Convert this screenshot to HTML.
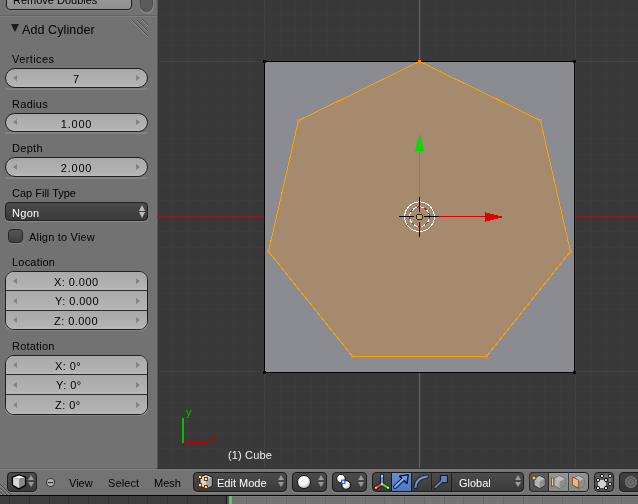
<!DOCTYPE html><html><head><meta charset="utf-8"><style>
*{margin:0;padding:0;box-sizing:border-box}
html,body{width:638px;height:504px;overflow:hidden;background:#393939;font-family:"Liberation Sans",sans-serif;font-size:11px}
.a{position:absolute}
.t{position:absolute;white-space:nowrap;line-height:1;color:#000;will-change:transform}
svg{position:absolute;left:0;top:0}
</style></head><body>
<svg width="638" height="504" viewBox="0 0 638 504"><rect x="0" y="0" width="638" height="504" fill="#393939"/><g shape-rendering="crispEdges"><rect x="171" y="0" width="1" height="469" fill="#3c3c3c"/><rect x="187" y="0" width="1" height="469" fill="#3c3c3c"/><rect x="202" y="0" width="1" height="469" fill="#3c3c3c"/><rect x="218" y="0" width="1" height="469" fill="#3c3c3c"/><rect x="233" y="0" width="1" height="469" fill="#3c3c3c"/><rect x="249" y="0" width="1" height="469" fill="#3c3c3c"/><rect x="264" y="0" width="1" height="469" fill="#434343"/><rect x="280" y="0" width="1" height="469" fill="#3c3c3c"/><rect x="295" y="0" width="1" height="469" fill="#3c3c3c"/><rect x="311" y="0" width="1" height="469" fill="#3c3c3c"/><rect x="327" y="0" width="1" height="469" fill="#3c3c3c"/><rect x="342" y="0" width="1" height="469" fill="#3c3c3c"/><rect x="358" y="0" width="1" height="469" fill="#3c3c3c"/><rect x="373" y="0" width="1" height="469" fill="#3c3c3c"/><rect x="389" y="0" width="1" height="469" fill="#3c3c3c"/><rect x="404" y="0" width="1" height="469" fill="#3c3c3c"/><rect x="420" y="0" width="1" height="469" fill="#434343"/><rect x="435" y="0" width="1" height="469" fill="#3c3c3c"/><rect x="451" y="0" width="1" height="469" fill="#3c3c3c"/><rect x="466" y="0" width="1" height="469" fill="#3c3c3c"/><rect x="482" y="0" width="1" height="469" fill="#3c3c3c"/><rect x="498" y="0" width="1" height="469" fill="#3c3c3c"/><rect x="513" y="0" width="1" height="469" fill="#3c3c3c"/><rect x="529" y="0" width="1" height="469" fill="#3c3c3c"/><rect x="544" y="0" width="1" height="469" fill="#3c3c3c"/><rect x="560" y="0" width="1" height="469" fill="#3c3c3c"/><rect x="575" y="0" width="1" height="469" fill="#434343"/><rect x="591" y="0" width="1" height="469" fill="#3c3c3c"/><rect x="606" y="0" width="1" height="469" fill="#3c3c3c"/><rect x="622" y="0" width="1" height="469" fill="#3c3c3c"/><rect x="158" y="14" width="480" height="1" fill="#3c3c3c"/><rect x="158" y="30" width="480" height="1" fill="#3c3c3c"/><rect x="158" y="45" width="480" height="1" fill="#3c3c3c"/><rect x="158" y="61" width="480" height="1" fill="#434343"/><rect x="158" y="76" width="480" height="1" fill="#3c3c3c"/><rect x="158" y="92" width="480" height="1" fill="#3c3c3c"/><rect x="158" y="107" width="480" height="1" fill="#3c3c3c"/><rect x="158" y="123" width="480" height="1" fill="#3c3c3c"/><rect x="158" y="138" width="480" height="1" fill="#3c3c3c"/><rect x="158" y="154" width="480" height="1" fill="#3c3c3c"/><rect x="158" y="169" width="480" height="1" fill="#3c3c3c"/><rect x="158" y="185" width="480" height="1" fill="#3c3c3c"/><rect x="158" y="200" width="480" height="1" fill="#3c3c3c"/><rect x="158" y="216" width="480" height="1" fill="#434343"/><rect x="158" y="231" width="480" height="1" fill="#3c3c3c"/><rect x="158" y="247" width="480" height="1" fill="#3c3c3c"/><rect x="158" y="262" width="480" height="1" fill="#3c3c3c"/><rect x="158" y="278" width="480" height="1" fill="#3c3c3c"/><rect x="158" y="293" width="480" height="1" fill="#3c3c3c"/><rect x="158" y="309" width="480" height="1" fill="#3c3c3c"/><rect x="158" y="324" width="480" height="1" fill="#3c3c3c"/><rect x="158" y="340" width="480" height="1" fill="#3c3c3c"/><rect x="158" y="355" width="480" height="1" fill="#3c3c3c"/><rect x="158" y="371" width="480" height="1" fill="#434343"/><rect x="158" y="386" width="480" height="1" fill="#3c3c3c"/><rect x="158" y="402" width="480" height="1" fill="#3c3c3c"/><rect x="158" y="417" width="480" height="1" fill="#3c3c3c"/><rect x="158" y="433" width="480" height="1" fill="#3c3c3c"/><rect x="158" y="448" width="480" height="1" fill="#3c3c3c"/><rect x="158" y="464" width="480" height="1" fill="#3c3c3c"/></g><rect x="158" y="216" width="480" height="1" fill="#8c1c1c" shape-rendering="crispEdges"/><rect x="419" y="0" width="1" height="469" fill="#1f8c1f" shape-rendering="crispEdges"/><rect x="264" y="61" width="311" height="312" fill="#8b8c91" shape-rendering="crispEdges"/><rect x="264.5" y="61.5" width="310" height="311" fill="none" stroke="#000" stroke-width="1" shape-rendering="crispEdges"/><rect x="263" y="60" width="3" height="3" fill="#000" shape-rendering="crispEdges"/><rect x="573" y="60" width="3" height="3" fill="#000" shape-rendering="crispEdges"/><rect x="263" y="371" width="3" height="3" fill="#000" shape-rendering="crispEdges"/><rect x="573" y="371" width="3" height="3" fill="#000" shape-rendering="crispEdges"/><polygon points="419.50,61.50 540.50,120.50 570.50,251.50 486.50,356.50 352.50,356.50 268.50,251.50 298.50,120.50" fill="#a68a6e"/><polygon points="419.50,61.50 540.50,120.50 570.50,251.50 486.50,356.50 352.50,356.50 268.50,251.50 298.50,120.50" fill="none" stroke="#ffa000" stroke-width="1" shape-rendering="crispEdges"/><rect x="418" y="60" width="3" height="3" fill="#ff8c00" shape-rendering="crispEdges"/><rect x="539" y="119" width="3" height="3" fill="#ff8c00" shape-rendering="crispEdges"/><rect x="569" y="250" width="3" height="3" fill="#ff8c00" shape-rendering="crispEdges"/><rect x="485" y="355" width="3" height="3" fill="#ff8c00" shape-rendering="crispEdges"/><rect x="351" y="355" width="3" height="3" fill="#ff8c00" shape-rendering="crispEdges"/><rect x="267" y="250" width="3" height="3" fill="#ff8c00" shape-rendering="crispEdges"/><rect x="297" y="119" width="3" height="3" fill="#ff8c00" shape-rendering="crispEdges"/><g shape-rendering="crispEdges"><rect x="419" y="136" width="1" height="61" fill="#00dd00"/><rect x="419" y="133" width="1" height="4" fill="#00dd00"/><rect x="418" y="137" width="3" height="4" fill="#00dd00"/><rect x="417" y="141" width="5" height="4" fill="#00dd00"/><rect x="416" y="145" width="7" height="4" fill="#00dd00"/><rect x="415" y="149" width="9" height="2" fill="#00dd00"/><rect x="439" y="216" width="46" height="1" fill="#e00000"/><rect x="485" y="212" width="1" height="10" fill="#e00000"/><rect x="486" y="213" width="4" height="8" fill="#e00000"/><rect x="490" y="214" width="4" height="6" fill="#e00000"/><rect x="494" y="215" width="4" height="4" fill="#e00000"/><rect x="498" y="216" width="4" height="2" fill="#e00000"/></g><circle cx="419.5" cy="216.7" r="14.8" fill="none" stroke="#fff" stroke-width="1" shape-rendering="crispEdges"/><circle cx="419.5" cy="216.7" r="9.9" fill="none" stroke="#fff" stroke-width="1" shape-rendering="crispEdges"/><circle cx="419.5" cy="216.7" r="9.9" fill="none" stroke="#ff0000" stroke-width="1" stroke-dasharray="3.73 3.73" stroke-dashoffset="1.5" shape-rendering="crispEdges"/><g shape-rendering="crispEdges" fill="#000"><rect x="399" y="216" width="15" height="1"/><rect x="424" y="216" width="15" height="1"/><rect x="419" y="197" width="1" height="15"/><rect x="419" y="222" width="1" height="15"/><rect x="416" y="215" width="7" height="4" fill="#222"/><rect x="417" y="214" width="5" height="6" fill="#222"/></g><rect x="417" y="215" width="5" height="4" fill="#e8a050" shape-rendering="crispEdges"/><g shape-rendering="crispEdges"><rect x="183" y="442" width="26" height="2" fill="#c00000"/><rect x="182" y="418" width="2" height="25" fill="#00c000"/></g></svg>
<div class="t" style="left:186px;top:407px;color:#00c000;font-size:11px">y</div>
<div class="t" style="left:211px;top:432px;color:#c00000;font-size:11px">x</div>
<div class="t" style="left:227.5px;top:450px;color:#f0f0f0;font-size:11px;letter-spacing:0.15px">(1) Cube</div>
<div class="a" style="left:0;top:0;width:157px;height:469px;background:#727272"></div>
<div class="a" style="left:157px;top:0;width:1px;height:469px;background:#575757"></div>
<div class="a" style="left:158px;top:0;width:1px;height:469px;background:#363636"></div>
<div class="a" style="left:157px;top:216px;width:2px;height:1px;background:#862020"></div>
<div class="a" style="left:6px;top:8px;width:126px;height:3px;border-radius:0 0 4px 4px;background:#7f7f7f"></div>
<div class="a" style="left:6px;top:-12px;width:126px;height:22px;border:1px solid #1e1e1e;border-radius:4px;background:linear-gradient(#a2a2a2,#8f8f8f)"></div>
<div class="t" style="left:13px;top:-5px;letter-spacing:0px">Remove Doubles</div>
<div class="a" style="left:139.5px;top:-8px;width:14px;height:21.5px;border-radius:7px;background:#848484"></div>
<div class="a" style="left:140px;top:-8px;width:13px;height:20px;border-radius:6.5px;background:#5b5b5b;border:1px solid #4c4c4c"></div>
<div class="a" style="left:0;top:15px;width:157px;height:1px;background:#646464"></div>
<div class="a" style="left:0;top:16px;width:157px;height:1px;background:#7e7e7e"></div>
<div class="a" style="left:11px;top:24px;width:0;height:0;border-left:4px solid transparent;border-right:4px solid transparent;border-top:8px solid #1a1a1a"></div>
<div class="t" style="left:22px;top:24px;font-size:12.5px;letter-spacing:0.1px">Add Cylinder</div>
<svg width="160" height="40" shape-rendering="crispEdges"><rect x="132" y="20" width="1" height="1" fill="#4e4e4e"/><rect x="132" y="21" width="1" height="1" fill="#8e8e8e"/><rect x="133" y="21" width="1" height="1" fill="#4e4e4e"/><rect x="133" y="22" width="1" height="1" fill="#8e8e8e"/><rect x="134" y="22" width="1" height="1" fill="#4e4e4e"/><rect x="134" y="23" width="1" height="1" fill="#8e8e8e"/><rect x="135" y="23" width="1" height="1" fill="#4e4e4e"/><rect x="135" y="24" width="1" height="1" fill="#8e8e8e"/><rect x="136" y="24" width="1" height="1" fill="#4e4e4e"/><rect x="136" y="25" width="1" height="1" fill="#8e8e8e"/><rect x="137" y="25" width="1" height="1" fill="#4e4e4e"/><rect x="137" y="26" width="1" height="1" fill="#8e8e8e"/><rect x="138" y="26" width="1" height="1" fill="#4e4e4e"/><rect x="138" y="27" width="1" height="1" fill="#8e8e8e"/><rect x="139" y="27" width="1" height="1" fill="#4e4e4e"/><rect x="139" y="28" width="1" height="1" fill="#8e8e8e"/><rect x="140" y="28" width="1" height="1" fill="#4e4e4e"/><rect x="140" y="29" width="1" height="1" fill="#8e8e8e"/><rect x="141" y="29" width="1" height="1" fill="#4e4e4e"/><rect x="141" y="30" width="1" height="1" fill="#8e8e8e"/><rect x="142" y="30" width="1" height="1" fill="#4e4e4e"/><rect x="142" y="31" width="1" height="1" fill="#8e8e8e"/><rect x="143" y="31" width="1" height="1" fill="#4e4e4e"/><rect x="143" y="32" width="1" height="1" fill="#8e8e8e"/><rect x="144" y="32" width="1" height="1" fill="#4e4e4e"/><rect x="144" y="33" width="1" height="1" fill="#8e8e8e"/><rect x="145" y="33" width="1" height="1" fill="#4e4e4e"/><rect x="145" y="34" width="1" height="1" fill="#8e8e8e"/><rect x="146" y="34" width="1" height="1" fill="#4e4e4e"/><rect x="146" y="35" width="1" height="1" fill="#8e8e8e"/><rect x="147" y="35" width="1" height="1" fill="#4e4e4e"/><rect x="147" y="36" width="1" height="1" fill="#8e8e8e"/><rect x="137" y="20" width="1" height="1" fill="#4e4e4e"/><rect x="137" y="21" width="1" height="1" fill="#8e8e8e"/><rect x="138" y="21" width="1" height="1" fill="#4e4e4e"/><rect x="138" y="22" width="1" height="1" fill="#8e8e8e"/><rect x="139" y="22" width="1" height="1" fill="#4e4e4e"/><rect x="139" y="23" width="1" height="1" fill="#8e8e8e"/><rect x="140" y="23" width="1" height="1" fill="#4e4e4e"/><rect x="140" y="24" width="1" height="1" fill="#8e8e8e"/><rect x="141" y="24" width="1" height="1" fill="#4e4e4e"/><rect x="141" y="25" width="1" height="1" fill="#8e8e8e"/><rect x="142" y="25" width="1" height="1" fill="#4e4e4e"/><rect x="142" y="26" width="1" height="1" fill="#8e8e8e"/><rect x="143" y="26" width="1" height="1" fill="#4e4e4e"/><rect x="143" y="27" width="1" height="1" fill="#8e8e8e"/><rect x="144" y="27" width="1" height="1" fill="#4e4e4e"/><rect x="144" y="28" width="1" height="1" fill="#8e8e8e"/><rect x="145" y="28" width="1" height="1" fill="#4e4e4e"/><rect x="145" y="29" width="1" height="1" fill="#8e8e8e"/><rect x="146" y="29" width="1" height="1" fill="#4e4e4e"/><rect x="146" y="30" width="1" height="1" fill="#8e8e8e"/><rect x="147" y="30" width="1" height="1" fill="#4e4e4e"/><rect x="147" y="31" width="1" height="1" fill="#8e8e8e"/><rect x="142" y="19" width="1" height="1" fill="#4e4e4e"/><rect x="142" y="20" width="1" height="1" fill="#8e8e8e"/><rect x="143" y="20" width="1" height="1" fill="#4e4e4e"/><rect x="143" y="21" width="1" height="1" fill="#8e8e8e"/><rect x="144" y="21" width="1" height="1" fill="#4e4e4e"/><rect x="144" y="22" width="1" height="1" fill="#8e8e8e"/><rect x="145" y="22" width="1" height="1" fill="#4e4e4e"/><rect x="145" y="23" width="1" height="1" fill="#8e8e8e"/><rect x="146" y="23" width="1" height="1" fill="#4e4e4e"/><rect x="146" y="24" width="1" height="1" fill="#8e8e8e"/><rect x="147" y="24" width="1" height="1" fill="#4e4e4e"/><rect x="147" y="25" width="1" height="1" fill="#8e8e8e"/></svg>
<div class="t" style="left:12px;top:54px;letter-spacing:0.4px">Vertices</div>
<div class="a" style="left:5px;top:88px;width:143px;height:2px;border-radius:0 0 10px 10px;background:#838383"></div>
<div class="a" style="left:5px;top:68px;width:143px;height:20px;border:1px solid #1e1e1e;border-radius:10px;background:linear-gradient(#a9a9a9,#b3b3b3 85%,#bababa)"></div>
<div class="a" style="left:13px;top:75px;width:0;height:0;border-top:3px solid transparent;border-bottom:3px solid transparent;border-right:4px solid #828282"></div><div class="a" style="left:136px;top:75px;width:0;height:0;border-top:3px solid transparent;border-bottom:3px solid transparent;border-left:4px solid #828282"></div>
<div class="t" style="left:5px;width:143px;top:74px;text-align:center;letter-spacing:0.8px">7</div>
<div class="t" style="left:12px;top:99px;letter-spacing:0.3px">Radius</div>
<div class="a" style="left:5px;top:132px;width:143px;height:2px;border-radius:0 0 10px 10px;background:#838383"></div>
<div class="a" style="left:5px;top:113px;width:143px;height:19px;border:1px solid #1e1e1e;border-radius:10px;background:linear-gradient(#a9a9a9,#b3b3b3 85%,#bababa)"></div>
<div class="a" style="left:13px;top:119px;width:0;height:0;border-top:3px solid transparent;border-bottom:3px solid transparent;border-right:4px solid #828282"></div><div class="a" style="left:136px;top:119px;width:0;height:0;border-top:3px solid transparent;border-bottom:3px solid transparent;border-left:4px solid #828282"></div>
<div class="t" style="left:5px;width:143px;top:119px;text-align:center;letter-spacing:0.8px">1.000</div>
<div class="t" style="left:12px;top:143px;letter-spacing:0.3px">Depth</div>
<div class="a" style="left:5px;top:177px;width:143px;height:2px;border-radius:0 0 10px 10px;background:#838383"></div>
<div class="a" style="left:5px;top:157px;width:143px;height:20px;border:1px solid #1e1e1e;border-radius:10px;background:linear-gradient(#a9a9a9,#b3b3b3 85%,#bababa)"></div>
<div class="a" style="left:13px;top:164px;width:0;height:0;border-top:3px solid transparent;border-bottom:3px solid transparent;border-right:4px solid #828282"></div><div class="a" style="left:136px;top:164px;width:0;height:0;border-top:3px solid transparent;border-bottom:3px solid transparent;border-left:4px solid #828282"></div>
<div class="t" style="left:5px;width:143px;top:163px;text-align:center;letter-spacing:0.8px">2.000</div>
<div class="t" style="left:12px;top:188px;letter-spacing:0px">Cap Fill Type</div>
<div class="a" style="left:5px;top:218px;width:143px;height:4px;border-radius:0 0 4px 4px;background:#8a8a8a"></div>
<div class="a" style="left:5px;top:202px;width:143px;height:19px;border:1px solid #222;border-radius:4px;background:linear-gradient(#4b4b4b,#393939)"></div>
<div class="t" style="left:12px;top:208px;color:#fff;letter-spacing:0.3px">Ngon</div>
<div class="a" style="left:139px;top:205px;width:0;height:0;border-left:3px solid transparent;border-right:3px solid transparent;border-bottom:6px solid #bdbdbd"></div>
<div class="a" style="left:139px;top:212px;width:0;height:0;border-left:3px solid transparent;border-right:3px solid transparent;border-top:6px solid #bdbdbd"></div>
<div class="a" style="left:8px;top:239px;width:15px;height:5px;border-radius:0 0 4px 4px;background:#858585"></div>
<div class="a" style="left:8px;top:229px;width:15px;height:14px;border:1px solid #262626;border-radius:4px;background:linear-gradient(#555,#404040)"></div>
<div class="t" style="left:29px;top:232px;letter-spacing:0.2px">Align to View</div>
<div class="t" style="left:12px;top:257px;letter-spacing:0.2px">Location</div>
<div class="a" style="left:5px;top:324px;width:143px;height:7px;border-radius:0 0 9px 9px;background:#838383"></div>
<div class="a" style="left:5px;top:271px;width:143px;height:59px;border:1px solid #1e1e1e;border-radius:9px;overflow:hidden;background:linear-gradient(#a9a9a9,#b3b3b3 85%,#bababa)">
<div class="a" style="left:0;top:0px;width:141px;height:18px;background:linear-gradient(#a9a9a9,#b3b3b3 85%,#bababa)"></div>
<div class="a" style="left:0;top:19px;width:141px;height:19px;background:linear-gradient(#a9a9a9,#b3b3b3 85%,#bababa)"></div>
<div class="a" style="left:0;top:39px;width:141px;height:18px;background:linear-gradient(#a9a9a9,#b3b3b3 85%,#bababa)"></div>
<div class="a" style="left:0;top:18px;width:141px;height:1px;background:#2a2a2a"></div>
<div class="a" style="left:0;top:38px;width:141px;height:1px;background:#2a2a2a"></div>
</div>
<div class="a" style="left:13px;top:278px;width:0;height:0;border-top:3px solid transparent;border-bottom:3px solid transparent;border-right:4px solid #828282"></div><div class="a" style="left:136px;top:278px;width:0;height:0;border-top:3px solid transparent;border-bottom:3px solid transparent;border-left:4px solid #828282"></div>
<div class="t" style="left:54px;top:277px;letter-spacing:0.45px">X: 0.000</div>
<div class="a" style="left:13px;top:298px;width:0;height:0;border-top:3px solid transparent;border-bottom:3px solid transparent;border-right:4px solid #828282"></div><div class="a" style="left:136px;top:298px;width:0;height:0;border-top:3px solid transparent;border-bottom:3px solid transparent;border-left:4px solid #828282"></div>
<div class="t" style="left:55px;top:296px;letter-spacing:0.45px">Y: 0.000</div>
<div class="a" style="left:13px;top:317px;width:0;height:0;border-top:3px solid transparent;border-bottom:3px solid transparent;border-right:4px solid #828282"></div><div class="a" style="left:136px;top:317px;width:0;height:0;border-top:3px solid transparent;border-bottom:3px solid transparent;border-left:4px solid #828282"></div>
<div class="t" style="left:54px;top:316px;letter-spacing:0.45px">Z: 0.000</div>
<div class="t" style="left:12px;top:341px;letter-spacing:0.2px">Rotation</div>
<div class="a" style="left:5px;top:409px;width:143px;height:7px;border-radius:0 0 9px 9px;background:#838383"></div>
<div class="a" style="left:5px;top:355px;width:143px;height:60px;border:1px solid #1e1e1e;border-radius:9px;overflow:hidden;background:linear-gradient(#a9a9a9,#b3b3b3 85%,#bababa)">
<div class="a" style="left:0;top:0px;width:141px;height:18px;background:linear-gradient(#a9a9a9,#b3b3b3 85%,#bababa)"></div>
<div class="a" style="left:0;top:19px;width:141px;height:19px;background:linear-gradient(#a9a9a9,#b3b3b3 85%,#bababa)"></div>
<div class="a" style="left:0;top:39px;width:141px;height:19px;background:linear-gradient(#a9a9a9,#b3b3b3 85%,#bababa)"></div>
<div class="a" style="left:0;top:18px;width:141px;height:1px;background:#2a2a2a"></div>
<div class="a" style="left:0;top:38px;width:141px;height:1px;background:#2a2a2a"></div>
</div>
<div class="a" style="left:13px;top:362px;width:0;height:0;border-top:3px solid transparent;border-bottom:3px solid transparent;border-right:4px solid #828282"></div><div class="a" style="left:136px;top:362px;width:0;height:0;border-top:3px solid transparent;border-bottom:3px solid transparent;border-left:4px solid #828282"></div>
<div class="t" style="left:55px;top:361px;letter-spacing:0.45px">X: 0°</div>
<div class="a" style="left:13px;top:382px;width:0;height:0;border-top:3px solid transparent;border-bottom:3px solid transparent;border-right:4px solid #828282"></div><div class="a" style="left:136px;top:382px;width:0;height:0;border-top:3px solid transparent;border-bottom:3px solid transparent;border-left:4px solid #828282"></div>
<div class="t" style="left:56px;top:380px;letter-spacing:0.45px">Y: 0°</div>
<div class="a" style="left:13px;top:402px;width:0;height:0;border-top:3px solid transparent;border-bottom:3px solid transparent;border-right:4px solid #828282"></div><div class="a" style="left:136px;top:402px;width:0;height:0;border-top:3px solid transparent;border-bottom:3px solid transparent;border-left:4px solid #828282"></div>
<div class="t" style="left:55px;top:400px;letter-spacing:0.45px">Z: 0°</div>
<div class="a" style="left:0;top:469px;width:638px;height:26px;background:#737373;border-top:1px solid #808080"></div>
<div class="a" style="left:0;top:468px;width:157px;height:1px;background:#686868"></div>
<div class="a" style="left:157px;top:468px;width:481px;height:1px;background:#2e2e2e"></div>
<div class="a" style="left:0;top:495px;width:638px;height:1px;background:#050505"></div>
<div class="a" style="left:0;top:496px;width:229px;height:8px;background:#3d3d3d"></div>
<div class="a" style="left:229px;top:496px;width:409px;height:8px;background:#737373"></div>
<div class="a" style="left:9px;top:496px;width:1px;height:8px;background:#333"></div><div class="a" style="left:29px;top:496px;width:1px;height:8px;background:#333"></div><div class="a" style="left:49px;top:496px;width:1px;height:8px;background:#333"></div><div class="a" style="left:68px;top:496px;width:1px;height:8px;background:#333"></div><div class="a" style="left:88px;top:496px;width:1px;height:8px;background:#333"></div><div class="a" style="left:108px;top:496px;width:1px;height:8px;background:#333"></div><div class="a" style="left:128px;top:496px;width:1px;height:8px;background:#333"></div><div class="a" style="left:147px;top:496px;width:1px;height:8px;background:#333"></div><div class="a" style="left:167px;top:496px;width:1px;height:8px;background:#333"></div><div class="a" style="left:187px;top:496px;width:1px;height:8px;background:#333"></div><div class="a" style="left:207px;top:496px;width:1px;height:8px;background:#333"></div><div class="a" style="left:226px;top:496px;width:1px;height:8px;background:#333"></div><div class="a" style="left:246px;top:496px;width:1px;height:8px;background:#666"></div><div class="a" style="left:266px;top:496px;width:1px;height:8px;background:#666"></div><div class="a" style="left:286px;top:496px;width:1px;height:8px;background:#666"></div><div class="a" style="left:305px;top:496px;width:1px;height:8px;background:#666"></div><div class="a" style="left:325px;top:496px;width:1px;height:8px;background:#666"></div><div class="a" style="left:345px;top:496px;width:1px;height:8px;background:#666"></div><div class="a" style="left:365px;top:496px;width:1px;height:8px;background:#666"></div><div class="a" style="left:384px;top:496px;width:1px;height:8px;background:#666"></div><div class="a" style="left:404px;top:496px;width:1px;height:8px;background:#666"></div><div class="a" style="left:424px;top:496px;width:1px;height:8px;background:#666"></div><div class="a" style="left:444px;top:496px;width:1px;height:8px;background:#666"></div><div class="a" style="left:463px;top:496px;width:1px;height:8px;background:#666"></div><div class="a" style="left:483px;top:496px;width:1px;height:8px;background:#666"></div><div class="a" style="left:503px;top:496px;width:1px;height:8px;background:#666"></div><div class="a" style="left:523px;top:496px;width:1px;height:8px;background:#666"></div><div class="a" style="left:542px;top:496px;width:1px;height:8px;background:#666"></div><div class="a" style="left:562px;top:496px;width:1px;height:8px;background:#666"></div><div class="a" style="left:582px;top:496px;width:1px;height:8px;background:#666"></div><div class="a" style="left:602px;top:496px;width:1px;height:8px;background:#666"></div><div class="a" style="left:621px;top:496px;width:1px;height:8px;background:#666"></div>
<div class="a" style="left:226px;top:496px;width:1px;height:8px;background:#151515"></div><div class="a" style="left:227px;top:496px;width:2px;height:8px;background:#555"></div>
<div class="a" style="left:232px;top:496px;width:406px;height:1px;background:#7c7c7c"></div>
<div class="a" style="left:229px;top:496px;width:3px;height:8px;background:#5ac85a"></div>
<div class="a" style="left:7px;top:488px;width:30px;height:5px;border-radius:0 0 4px 4px;background:#868686"></div>
<div class="a" style="left:7px;top:472px;width:30px;height:20px;border:1px solid #1c1c1c;border-radius:4px;background:linear-gradient(#4c4c4c,#3a3a3a)"></div>
<div class="a" style="left:28px;top:475px;width:0;height:0;border-left:3px solid transparent;border-right:3px solid transparent;border-bottom:5px solid #9a9a9a"></div>
<div class="a" style="left:28px;top:482px;width:0;height:0;border-left:3px solid transparent;border-right:3px solid transparent;border-top:5px solid #9a9a9a"></div>
<div class="t" style="left:69px;top:478px">View</div>
<div class="t" style="left:108px;top:478px;letter-spacing:0.1px">Select</div>
<div class="t" style="left:154px;top:478px">Mesh</div>
<div class="a" style="left:193px;top:488px;width:94px;height:5px;border-radius:0 0 4px 4px;background:#868686"></div>
<div class="a" style="left:193px;top:472px;width:94px;height:20px;border:1px solid #1c1c1c;border-radius:4px;background:linear-gradient(#4c4c4c,#3a3a3a)"></div>
<div class="t" style="left:217px;top:478px;color:#fff">Edit Mode</div>
<div class="a" style="left:278px;top:475px;width:0;height:0;border-left:3px solid transparent;border-right:3px solid transparent;border-bottom:5px solid #9a9a9a"></div>
<div class="a" style="left:278px;top:482px;width:0;height:0;border-left:3px solid transparent;border-right:3px solid transparent;border-top:5px solid #9a9a9a"></div>
<div class="a" style="left:292px;top:488px;width:35px;height:5px;border-radius:0 0 4px 4px;background:#868686"></div>
<div class="a" style="left:292px;top:472px;width:35px;height:20px;border:1px solid #1c1c1c;border-radius:4px;background:linear-gradient(#4c4c4c,#3a3a3a)"></div>
<div class="a" style="left:318px;top:475px;width:0;height:0;border-left:3px solid transparent;border-right:3px solid transparent;border-bottom:5px solid #9a9a9a"></div>
<div class="a" style="left:318px;top:482px;width:0;height:0;border-left:3px solid transparent;border-right:3px solid transparent;border-top:5px solid #9a9a9a"></div>
<div class="a" style="left:332px;top:488px;width:35px;height:5px;border-radius:0 0 4px 4px;background:#868686"></div>
<div class="a" style="left:332px;top:472px;width:35px;height:20px;border:1px solid #1c1c1c;border-radius:4px;background:linear-gradient(#4c4c4c,#3a3a3a)"></div>
<div class="a" style="left:358px;top:475px;width:0;height:0;border-left:3px solid transparent;border-right:3px solid transparent;border-bottom:5px solid #9a9a9a"></div>
<div class="a" style="left:358px;top:482px;width:0;height:0;border-left:3px solid transparent;border-right:3px solid transparent;border-top:5px solid #9a9a9a"></div>
<div class="a" style="left:372px;top:488px;width:80px;height:5px;border-radius:0 0 4px 4px;background:#868686"></div>
<div class="a" style="left:372px;top:472px;width:80px;height:20px;border:1px solid #1c1c1c;border-radius:4px 0 0 4px;background:linear-gradient(#4c4c4c,#3a3a3a)"></div>
<div class="a" style="left:391px;top:472px;width:21px;height:20px;background:linear-gradient(#6590d0,#5078b8);border:1px solid #1a1a1a"></div>
<div class="a" style="left:431px;top:472px;width:1px;height:20px;background:#222"></div>
<div class="a" style="left:451px;top:488px;width:73px;height:5px;border-radius:0 0 4px 4px;background:#868686"></div>
<div class="a" style="left:451px;top:472px;width:73px;height:20px;border:1px solid #1c1c1c;border-radius:0 4px 4px 0;background:linear-gradient(#4c4c4c,#3a3a3a)"></div>
<div class="t" style="left:459px;top:478px;color:#fff">Global</div>
<div class="a" style="left:515px;top:475px;width:0;height:0;border-left:3px solid transparent;border-right:3px solid transparent;border-bottom:5px solid #9a9a9a"></div>
<div class="a" style="left:515px;top:482px;width:0;height:0;border-left:3px solid transparent;border-right:3px solid transparent;border-top:5px solid #9a9a9a"></div>
<div class="a" style="left:529px;top:488px;width:60px;height:5px;border-radius:0 0 4px 4px;background:#868686"></div>
<div class="a" style="left:529px;top:472px;width:60px;height:20px;border:1px solid #1c1c1c;border-radius:4px;background:linear-gradient(#959595,#888)"></div>
<div class="a" style="left:529px;top:472px;width:20px;height:20px;background:linear-gradient(#5e5e5e,#525252);border:1px solid #2a2a2a;border-radius:4px 0 0 4px"></div>
<div class="a" style="left:568px;top:472px;width:1px;height:20px;background:#444"></div>
<div class="a" style="left:594px;top:488px;width:20px;height:5px;border-radius:0 0 4px 4px;background:#868686"></div>
<div class="a" style="left:594px;top:472px;width:20px;height:20px;border:1px solid #1c1c1c;border-radius:4px;background:linear-gradient(#5c5c5c,#4e4e4e)"></div>
<div class="a" style="left:619px;top:488px;width:30px;height:5px;border-radius:0 0 4px 4px;background:#868686"></div>
<div class="a" style="left:619px;top:472px;width:30px;height:20px;border:1px solid #1c1c1c;border-radius:4px;background:linear-gradient(#404040,#363636)"></div>
<svg width="638" height="504"><polygon points="19,474.8 25.6,477 25.6,485.2 19,489.2 12.4,485.2 12.4,477" fill="#000" stroke="#000" stroke-width="1.3" stroke-linejoin="round"/><polygon points="19,475.6 24.9,477.4 19,479 13.1,477.4" fill="#f8f8f8"/><polygon points="13.1,477.4 19,479 19,488.3 13.1,484.8" fill="#d6d6d6"/><polygon points="19,479 24.9,477.4 24.9,484.8 19,488.3" fill="#888"/><circle cx="50.5" cy="482.5" r="4" fill="#b4b4b4" stroke="#3c3c3c" stroke-width="1.2"/><rect x="48" y="482" width="5" height="1.2" fill="#333"/><polygon points="206,474.5 212,477 212,486 206,489 200,486 200,477" fill="#d4d4d4" stroke="#111" stroke-width="1"/><polygon points="206,480 211.5,477.3 211.5,485.7 206,488.5" fill="#a4a4a4"/><g shape-rendering="crispEdges"><rect x="198" y="475" width="4" height="4" fill="#6a3800"/><rect x="199" y="476" width="2" height="2" fill="#ffe6c0"/><rect x="204" y="477" width="4" height="4" fill="#6a3800"/><rect x="205" y="478" width="2" height="2" fill="#ffe6c0"/><rect x="198" y="483" width="4" height="4" fill="#6a3800"/><rect x="199" y="484" width="2" height="2" fill="#ffe6c0"/><rect x="204" y="485" width="4" height="4" fill="#6a3800"/><rect x="205" y="486" width="2" height="2" fill="#ffe6c0"/></g><defs><radialGradient id="sph" cx="0.35" cy="0.3" r="0.85"><stop offset="0" stop-color="#fff"/><stop offset="0.55" stop-color="#f2f2f2"/><stop offset="1" stop-color="#8a8a8a"/></radialGradient></defs><circle cx="304" cy="482" r="6.5" fill="url(#sph)" stroke="#111" stroke-width="1"/><circle cx="341" cy="478.6" r="4.3" fill="url(#sph)" stroke="#111" stroke-width="1"/><circle cx="346.2" cy="485" r="4.3" fill="url(#sph)" stroke="#111" stroke-width="1"/><rect x="341.7" y="480.2" width="3.2" height="3.2" fill="#fff" stroke="#1050ff" stroke-width="1.1"/><g stroke-linecap="round"><line x1="382" y1="484" x2="382" y2="475.5" stroke="#111" stroke-width="3.8"/><line x1="382" y1="484" x2="375.5" y2="488" stroke="#111" stroke-width="3.8"/><line x1="382" y1="484" x2="388.5" y2="488" stroke="#111" stroke-width="3.8"/><line x1="382" y1="484" x2="382" y2="475.5" stroke="#5a90f0" stroke-width="2.2"/><line x1="382" y1="484" x2="375.5" y2="488" stroke="#e04830" stroke-width="2.2"/><line x1="382" y1="484" x2="388.5" y2="488" stroke="#58d030" stroke-width="2.2"/><circle cx="382" cy="476" r="0.9" fill="#f0f0f0"/><circle cx="376" cy="487.7" r="0.9" fill="#f0f0f0"/><circle cx="388" cy="487.7" r="0.9" fill="#f0f0f0"/><circle cx="382" cy="484" r="1" fill="#e8e8e8"/></g><g stroke-linecap="round" stroke-linejoin="round"><line x1="395" y1="487" x2="404" y2="478.5" stroke="#101828" stroke-width="3.8"/><polygon points="408,475 406.8,483 400,476.3" fill="#101828" stroke="#101828" stroke-width="2"/><line x1="395" y1="487" x2="404" y2="478.5" stroke="#6a9ae8" stroke-width="2.2"/><polygon points="407.5,475.5 406.4,482 401,476.6" fill="#6a9ae8"/><line x1="395.3" y1="486.2" x2="403" y2="479" stroke="#c0d8ff" stroke-width="0.8"/><path d="M415.5,487 Q416,478 427,476.5" fill="none" stroke="#141a26" stroke-width="4"/><path d="M415.5,487 Q416,478 427,476.5" fill="none" stroke="#6482b4" stroke-width="2.4"/><path d="M415.8,485.5 Q416.5,478.5 426,477" fill="none" stroke="#90a8d0" stroke-width="0.7"/><line x1="435.5" y1="487" x2="442.5" y2="480.5" stroke="#141a26" stroke-width="3.6"/><rect x="440.5" y="475.5" width="7" height="7" fill="#6482b4" stroke="#141a26" stroke-width="1.2"/><line x1="435.5" y1="487" x2="442.5" y2="480.5" stroke="#6482b4" stroke-width="2"/></g><polygon points="539.5,475.5 545,478.5 545,485.5 539.5,488.5 534,485.5 534,478.5" fill="#b4b4b4" stroke="#333" stroke-width="1"/><polygon points="539.5,481.5 544.5,478.8 544.5,485.2 539.5,487.9" fill="#8e8e8e"/><polygon points="539.5,476.1 544.5,478.7 539.5,481.5 534.5,478.7" fill="#bdbdbd"/><circle cx="534" cy="478" r="2" fill="#ffc878" stroke="#6a3400" stroke-width="1"/><polygon points="559.5,475.5 565,478.5 565,485.5 559.5,488.5 554,485.5 554,478.5" fill="#b4b4b4" stroke="#6c6c6c" stroke-width="1"/><polygon points="559.5,481.5 564.5,478.8 564.5,485.2 559.5,487.9" fill="#8e8e8e"/><polygon points="559.5,476.1 564.5,478.7 559.5,481.5 554.5,478.7" fill="#bdbdbd"/><rect x="551.5" y="478" width="2.2" height="8" fill="#f0c890" stroke="#7a4a20" stroke-width="0.8"/><polygon points="578.5,475.5 584,478.5 584,485.5 578.5,488.5 573,485.5 573,478.5" fill="#b4b4b4" stroke="#6c6c6c" stroke-width="1"/><polygon points="578.5,481.5 583.5,478.8 583.5,485.2 578.5,487.9" fill="#8e8e8e"/><polygon points="578.5,476.1 583.5,478.7 578.5,481.5 573.5,478.7" fill="#bdbdbd"/><polygon points="572.5,477 578.5,480 578.5,488 572.5,485" fill="#e8b888" stroke="#7a4a20" stroke-width="0.8"/><polyline points="602,476 610,476 610,484" fill="none" stroke="#9a9a9a" stroke-width="1.2"/><rect x="598" y="480" width="8" height="8" fill="#d0d0d0"/><circle cx="602" cy="476" r="1.7" fill="#d8d8d8" stroke="#1a1a1a" stroke-width="1"/><circle cx="610" cy="476" r="1.7" fill="#d8d8d8" stroke="#1a1a1a" stroke-width="1"/><circle cx="610" cy="484" r="1.7" fill="#d8d8d8" stroke="#1a1a1a" stroke-width="1"/><circle cx="598" cy="480" r="1.6" fill="#fff" stroke="#000" stroke-width="1"/><circle cx="606" cy="480" r="1.6" fill="#fff" stroke="#000" stroke-width="1"/><circle cx="598" cy="488" r="1.6" fill="#fff" stroke="#000" stroke-width="1"/><circle cx="606" cy="488" r="1.6" fill="#fff" stroke="#000" stroke-width="1"/><circle cx="631" cy="482" r="5.3" fill="#585858" stroke="#7c7c7c" stroke-width="1.3"/><circle cx="631" cy="482" r="2.6" fill="#626262" stroke="#747474" stroke-width="1"/></svg>
<svg width="20" height="504" shape-rendering="crispEdges"><rect x="0" y="484" width="1" height="1" fill="#454545"/><rect x="0" y="485" width="1" height="1" fill="#8e8e8e"/><rect x="1" y="485" width="1" height="1" fill="#454545"/><rect x="1" y="486" width="1" height="1" fill="#8e8e8e"/><rect x="2" y="486" width="1" height="1" fill="#454545"/><rect x="2" y="487" width="1" height="1" fill="#8e8e8e"/><rect x="3" y="487" width="1" height="1" fill="#454545"/><rect x="3" y="488" width="1" height="1" fill="#8e8e8e"/><rect x="4" y="488" width="1" height="1" fill="#454545"/><rect x="4" y="489" width="1" height="1" fill="#8e8e8e"/><rect x="5" y="489" width="1" height="1" fill="#454545"/><rect x="5" y="490" width="1" height="1" fill="#8e8e8e"/><rect x="6" y="490" width="1" height="1" fill="#454545"/><rect x="6" y="491" width="1" height="1" fill="#8e8e8e"/><rect x="7" y="491" width="1" height="1" fill="#454545"/><rect x="7" y="492" width="1" height="1" fill="#8e8e8e"/><rect x="8" y="492" width="1" height="1" fill="#454545"/><rect x="8" y="493" width="1" height="1" fill="#8e8e8e"/><rect x="9" y="493" width="1" height="1" fill="#454545"/><rect x="9" y="494" width="1" height="1" fill="#8e8e8e"/><rect x="10" y="494" width="1" height="1" fill="#454545"/><rect x="0" y="488" width="1" height="1" fill="#454545"/><rect x="0" y="489" width="1" height="1" fill="#8e8e8e"/><rect x="1" y="489" width="1" height="1" fill="#454545"/><rect x="1" y="490" width="1" height="1" fill="#8e8e8e"/><rect x="2" y="490" width="1" height="1" fill="#454545"/><rect x="2" y="491" width="1" height="1" fill="#8e8e8e"/><rect x="3" y="491" width="1" height="1" fill="#454545"/><rect x="3" y="492" width="1" height="1" fill="#8e8e8e"/><rect x="4" y="492" width="1" height="1" fill="#454545"/><rect x="4" y="493" width="1" height="1" fill="#8e8e8e"/><rect x="5" y="493" width="1" height="1" fill="#454545"/><rect x="5" y="494" width="1" height="1" fill="#8e8e8e"/><rect x="6" y="494" width="1" height="1" fill="#454545"/><rect x="0" y="492" width="1" height="1" fill="#454545"/><rect x="0" y="493" width="1" height="1" fill="#8e8e8e"/><rect x="1" y="493" width="1" height="1" fill="#454545"/><rect x="1" y="494" width="1" height="1" fill="#8e8e8e"/><rect x="2" y="494" width="1" height="1" fill="#454545"/></svg>
</body></html>
